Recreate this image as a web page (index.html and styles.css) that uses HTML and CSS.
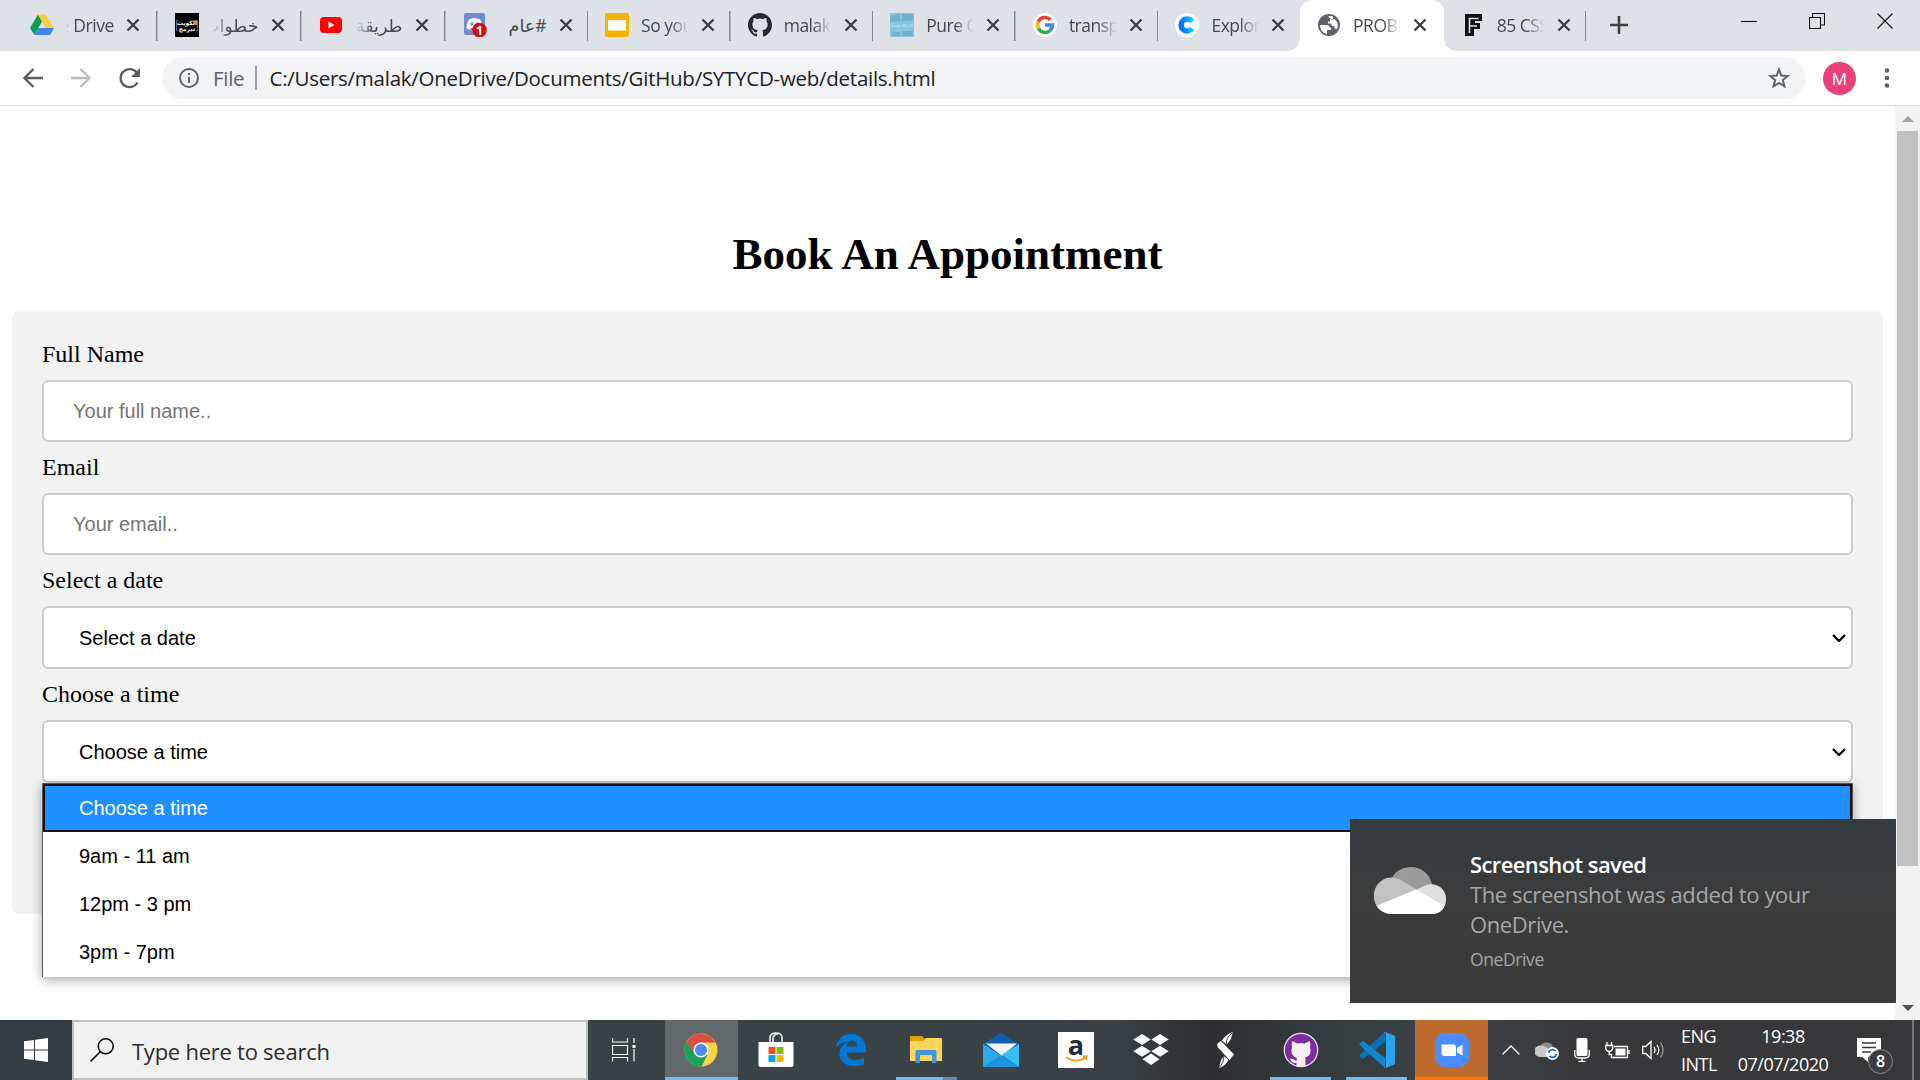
FILE: index.html
```html
<!DOCTYPE html>
<html lang="en">
<head>
<meta charset="utf-8">
<title>Book An Appointment</title>
<link rel="stylesheet" href="styles.css">
</head>
<body>
<div class="screen">
  <header class="tabstrip">
    <div class="tabs">
      <div class="tab">
        <svg class="fav" viewBox="0 0 24 24"><path fill="#0f9d58" d="M8 1.500 12 8.500 4.500 22 0 15z"/><path fill="#ffcd40" d="M8 1.500h7.700L24 15h-8z"/><path fill="#4285f4" d="M8.500 15H24l-4 7H4.500z"/></svg>
        <span class="label rtl"><span class="en">e Drive</span></span><svg class="close" viewBox="0 0 14 14"><path d="M1.5 1.5l11 11m0-11l-11 11"/></svg>
      </div>
      <div class="tab">
        <svg class="fav" viewBox="0 0 24 24"><rect width="24" height="24"/><path d="M3 7.500H1.500v10H3M21 7.500h1.500v10H21" fill="none" stroke="#3c6ea8"/><text x="12" y="12" class="logo-ar">الكويت</text><text x="12" y="17.500" class="logo-ar">تبرمج</text></svg>
        <span class="label rtl">خطوات</span><svg class="close" viewBox="0 0 14 14"><path d="M1.5 1.5l11 11m0-11l-11 11"/></svg>
      </div>
      <div class="tab">
        <svg class="fav" viewBox="0 0 24 24"><rect x="1" y="4" width="22" height="16" rx="4" fill="red"/><path fill="#fff" d="M9.500 8.500l6 3.500-6 3.500z"/></svg>
        <span class="label rtl">طريقة</span><svg class="close" viewBox="0 0 14 14"><path d="M1.5 1.5l11 11m0-11l-11 11"/></svg>
      </div>
      <div class="tab">
        <svg class="fav" viewBox="0 0 24 24"><rect x="1" width="21" height="22" rx="2" fill="#7289da"/><path fill="#fff" d="M6 6.500q5-3 11 0 3 5 2.500 9l-3.500 1.500-1-2H8l-1 2-3.500-1.500Q3 11 6 6.500z"/><circle cx="9" cy="11" r="1.700" fill="#7289da"/><circle cx="14" cy="11" r="1.700" fill="#7289da"/><circle cx="16.500" cy="17" r="7.300" fill="#d90b0b"/><text x="16.500" y="22" class="badge-one">1</text></svg>
        <span class="label rtl fit">#عام</span><svg class="close" viewBox="0 0 14 14"><path d="M1.5 1.5l11 11m0-11l-11 11"/></svg>
      </div>
      <div class="tab">
        <svg class="fav" viewBox="0 0 24 24"><rect width="24" height="24" rx="2" fill="#f4b400"/><rect x="3" y="7" width="18" height="10.500" fill="#fff"/></svg>
        <span class="label">So you</span><svg class="close" viewBox="0 0 14 14"><path d="M1.5 1.5l11 11m0-11l-11 11"/></svg>
      </div>
      <div class="tab">
        <svg class="fav" viewBox="0 0 16 16"><path fill="#24292e" d="M8 0C3.580 0 0 3.580 0 8c0 3.540 2.290 6.530 5.470 7.590.4.070.550-.170.550-.380 0-.190-.010-.820-.010-1.490-2.010.370-2.530-.490-2.690-.940-.090-.230-.480-.940-.820-1.130-.280-.150-.680-.520-.010-.530.630-.010 1.080.580 1.230.820.720 1.210 1.870.870 2.330.660.070-.520.280-.870.510-1.070-1.780-.200-3.640-.890-3.640-3.950 0-.870.310-1.590.820-2.150-.080-.200-.360-1.020.080-2.120 0 0 .670-.210 2.200.820.640-.180 1.320-.270 2-.270s1.360.090 2 .270c1.530-1.040 2.200-.820 2.200-.820.440 1.100.160 1.920.080 2.120.510.560.820 1.270.820 2.150 0 3.070-1.870 3.750-3.650 3.950.290.250.540.730.540 1.480 0 1.070-.010 1.930-.010 2.200 0 .210.150.460.550.380A8 8 0 0 0 16 8c0-4.420-3.580-8-8-8z"/></svg>
        <span class="label">malak</span><svg class="close" viewBox="0 0 14 14"><path d="M1.5 1.5l11 11m0-11l-11 11"/></svg>
      </div>
      <div class="tab">
        <svg class="fav" viewBox="0 0 24 24"><rect width="24" height="24" fill="#87c4dd"/><path d="M0 3l10-2v7L0 9zM12 1h11v6l-11 1zM2 19h8v4H2zM12 18h11v5H12z" fill="#6fb2d0"/><text x="12" y="14" class="logo-code">Code My UI</text></svg>
        <span class="label">Pure C</span><svg class="close" viewBox="0 0 14 14"><path d="M1.5 1.5l11 11m0-11l-11 11"/></svg>
      </div>
      <div class="tab">
        <svg class="fav" viewBox="0 0 24 24"><circle cx="12" cy="12" r="12" fill="#fff"/><g fill="none" stroke-width="3.600"><path stroke="#ea4335" d="M5.300 8.700a7.400 7.400 0 0 1 12.100-1.900"/><path stroke="#fbbc05" d="M5.300 8.700a7.400 7.400 0 0 0 0 6.600"/><path stroke="#34a853" d="M5.300 15.300a7.400 7.400 0 0 0 11.300 2.500"/><path stroke="#4285f4" d="M12 12h7.400a7.400 7.400 0 0 1-2.800 5.800"/></g></svg>
        <span class="label">transp</span><svg class="close" viewBox="0 0 14 14"><path d="M1.5 1.5l11 11m0-11l-11 11"/></svg>
      </div>
      <div class="tab">
        <svg class="fav" viewBox="0 0 24 24"><defs><linearGradient id="cg"><stop stop-color="#0a6cff"/><stop offset="1" stop-color="#0cf"/></linearGradient></defs><circle cx="12" cy="12" r="12" fill="#fff"/><path d="M17 8.500a6 6 0 1 0 0 7" fill="none" stroke="url(#cg)" stroke-width="5.500"/></svg>
        <span class="label">Explor</span><svg class="close" viewBox="0 0 14 14"><path d="M1.5 1.5l11 11m0-11l-11 11"/></svg>
      </div>
      <div class="tab active">
        <svg class="fav" viewBox="0 0 24 24"><circle cx="12" cy="12" r="11" fill="#5f6368"/><path fill="#fff" d="M3 12h7c3 0 2 3 4 3v2h-4v4c-5-1-7-5-7-9zM11 3.500c2-1 5 0 5 0v2.500h-3v2.500h-2v2h3.500v2.500h3v2.500l2.500.500c2-5 0-8-3-10l-2 1z"/></svg>
        <span class="label">PROBL</span><svg class="close" viewBox="0 0 14 14"><path d="M1.5 1.5l11 11m0-11l-11 11"/></svg>
      </div>
      <div class="tab">
        <svg class="fav" viewBox="0 0 24 24"><path fill="#111" d="M4 1h17v7H14v2h5v6h-6v7H4z"/><path fill="none" stroke="#dee1e6" stroke-width="1.600" d="M8.500 20V5.500h9M9 13h7"/></svg>
        <span class="label">85 CSS</span><svg class="close" viewBox="0 0 14 14"><path d="M1.5 1.5l11 11m0-11l-11 11"/></svg>
      </div>
    </div>
    <svg class="newtab" viewBox="0 0 18 18"><path d="M9 0v18M0 9h18"/></svg>
    <div class="winctl">
      <svg viewBox="0 0 16 16"><path d="M0 8.500h16"/></svg>
      <svg viewBox="0 0 16 16"><path d="M.5 4.500h11v11H.500zM3.500 4V.5h12v11.500H12"/></svg>
      <svg viewBox="0 0 16 16"><path d="M.5.5l15 15m0-15l-15 15"/></svg>
    </div>
  </header>

  <nav class="toolbar">
    <svg class="nav" viewBox="0 0 20 20"><path d="M20 10H2M10.500 1L1.500 10l9 9"/></svg>
    <svg class="nav dim" viewBox="0 0 20 20"><path d="M0 10h18M9.500 1l9 9-9 9"/></svg>
    <svg class="nav" viewBox="0 0 22 22"><path d="M18.500 15.500a9 9 0 1 1-.500-9.500"/><path class="solid" d="M21 1v9h-9z"/></svg>
    <div class="omnibox">
      <svg class="info" viewBox="0 0 20 20"><circle cx="10" cy="10" r="9"/><path d="M10 9v6M10 5v2"/></svg>
      <span class="scheme">File</span><i class="bar"></i><span class="url">C:/Users/malak/OneDrive/Documents/GitHub/SYTYCD-web/details.html</span>
      <svg class="star" viewBox="0 0 22 22"><path d="M11 2.500l2.300 6.100 6.500.400-5 4.100 1.700 6.300L11 16l-5.500 3.400L7.200 13.100 2.200 9l6.500-.400z"/></svg>
    </div>
    <span class="avatar">M</span>
    <svg class="dots" viewBox="0 0 6 20"><circle cx="3" cy="2.500" r="2.300"/><circle cx="3" cy="10" r="2.300"/><circle cx="3" cy="17.500" r="2.300"/></svg>
  </nav>

  <div class="viewport">
    <main class="page">
      <h1>Book An Appointment</h1>
      <form class="card">
        <label>Full Name</label>
        <div class="field hint">Your full name..</div>
        <label>Email</label>
        <div class="field hint">Your email..</div>
        <label>Select a date</label>
        <div class="field select">Select a date<svg viewBox="0 0 14 8"><path d="M1 1l6 6 6-6"/></svg></div>
        <label>Choose a time</label>
        <div class="field select">Choose a time<svg viewBox="0 0 14 8"><path d="M1 1l6 6 6-6"/></svg>
          <ul class="popup">
            <li class="on">Choose a time</li>
            <li>9am - 11 am</li>
            <li>12pm - 3 pm</li>
            <li>3pm - 7pm</li>
          </ul>
        </div>
      </form>
    </main>
    <div class="scrollbar">
      <svg viewBox="0 0 12 6"><path fill="#a3a3a3" d="M0 6l6-6 6 6z"/></svg>
      <div class="thumb"></div>
      <svg class="down" viewBox="0 0 12 6"><path fill="#505050" d="M0 0h12L6 6z"/></svg>
    </div>
    <aside class="toast">
      <svg class="cloud" viewBox="0 0 72 47"><defs><clipPath id="cl"><path d="M18 47C7 47 0 39 0 29c0-11 8-18.500 18-18.500C22 4 29 0 37 0c10 0 19 7 21 17.500 8 0 14 6.500 14 14.500 0 9-6 15-14 15z"/></clipPath></defs><g clip-path="url(#cl)"><rect width="72" height="47" fill="#9b9b9c"/><path fill="#c2c2c3" d="M0 47V10.500h18q5 0 9 2.500l16 10z"/><path fill="#e0e0e1" d="M42 23l8-4q4-2 8-2h14v30z"/><path fill="#fff" d="M0 40l42-17.500L72 40v7H0z"/></g></svg>
      <div class="toast-text">
        <strong>Screenshot saved</strong>
        <p>The screenshot was added to your<br>OneDrive.</p>
        <small>OneDrive</small>
      </div>
    </aside>
  </div>

  <footer class="taskbar">
    <div class="start"><svg viewBox="0 0 24 24"><path fill="#fff" d="M0 3.300L10 2v9.500H0zM11 1.800L24 0v11.500H11zM0 12.500h10V22L0 20.700zM11 12.500h13V24l-13-1.800z"/></svg></div>
    <div class="search"><svg viewBox="0 0 24 24"><circle cx="15.700" cy="8.300" r="7.500"/><path d="M10.300 13.700L.500 23.500"/></svg><span>Type here to search</span></div>
    <div class="apps">
      <div class="app view"><svg width="24" height="24" viewBox="0 0 24 24"><g fill="none" stroke="#fff" stroke-width="1.200"><path d="M.5 0v4h15V0M.5 23.500v-4h15v4M.5 7.500h15v9H.500zM22 0v5M22 11v12.500"/></g><path fill="#fff" d="M20.500 7h3v3h-3z"/></svg></div>
      <div class="app current"><svg width="34" height="34" viewBox="0 0 34 34"><circle cx="17" cy="17" r="16.500" fill="#fdd24b"/><path fill="#de4f43" d="M2.700 8.700A16.500 16.500 0 0 1 31.500 9.500H17L9.500 20z"/><path fill="#1b9f5b" d="M2.700 8.700A16.500 16.500 0 0 0 17.500 33.500l6-11.500L10 20z"/><circle cx="17" cy="17" r="7.600" fill="#f4f4f4"/><circle cx="17" cy="17" r="6" fill="#4c8bf5"/></svg></div>
      <div class="app"><svg width="36" height="36" viewBox="0 0 36 36"><path d="M12 10V6q0-5 6-5t6 5v4M15 10V6q1-4 5-4" fill="none" stroke="#e8e8e8" stroke-width="1.700"/><path fill="#fff" d="M.5 10h35v23q0 2-2 2h-31q-2 0-2-2z"/><path fill="#f25022" d="M10.500 15h7v7h-7z"/><path fill="#7fba00" d="M18.500 15h7v7h-7z"/><path fill="#00a4ef" d="M10.500 23h7v7h-7z"/><path fill="#ffb900" d="M18.500 23h7v7h-7z"/></svg></div>
      <div class="app"><svg width="30" height="32" viewBox="0 0 30 32"><path fill="#0078d7" d="M0 14C1 6 6 0 15 0c10 0 15 7 15 15v3.500H10.500c.300 5 4 7.500 9 7.500 3.500 0 6.500-1 8.500-2.300V30c-3 1.500-6 2-10 2C9 32 3.500 27 3.500 20c0-5.500 3-9.500 8-12C6 8 2.500 10.500 0 14zm10.500-1.500H21C21 9 19 6.800 16 6.800s-5 2.400-5.500 5.700z"/></svg></div>
      <div class="app open stacked"><svg width="32" height="28" viewBox="0 0 32 28"><path fill="#dfa000" d="M0 1q0-1 1-1h11l3 3-2 3H0z"/><path fill="#ffd55c" d="M0 5h13l3-3h15q1 0 1 1v22H0z"/><path fill="#3a96dd" d="M7 14h18q1.500 0 1.500 1.500V27H22v-8H10v8H5.500V15.500Q5.500 14 7 14z"/></svg></div>
      <div class="app"><svg width="36" height="34" viewBox="0 0 36 34"><path fill="#0f5fb0" d="M0 11L16 1q2-1.500 4 0l16 10-10 12H9z"/><path fill="#f2f2f5" d="M3 10.500h31L19 23z"/><path fill="#2ea7ec" d="M0 11l18 11.500L36 34H0z"/><path fill="#35c0f3" d="M36 11L18.500 22 36 34z"/><path fill="#1c94e0" d="M0 34l18-11.500L36 34z"/></svg></div>
      <div class="app"><svg width="36" height="36" viewBox="0 0 36 36"><rect width="36" height="36" fill="#fff"/><text x="18" y="22.500" class="amz">a</text><path d="M8 25.500q10 6 19 .5M25 24.500l3.500-.3-.8 3.300" fill="none" stroke="#f90" stroke-width="1.900"/></svg></div>
      <div class="app"><svg width="36" height="32" viewBox="0 0 36 32"><path fill="#fff" d="M9 0l8.700 5.500L9 11 .3 5.500zM27 0l8.700 5.500L27 11l-8.700-5.500zM9 11.800l8.700 5.500L9 22.800.3 17.300zM27 11.800l8.700 5.500-8.700 5.500-8.700-5.500zM18 19.500l8.500 5.700L18 31l-8.500-5.800z"/></svg></div>
      <div class="app"><svg width="18" height="36" viewBox="0 0 18 36"><path fill="#fff" d="M.5 11.500L4 9l13 13.500-4.500 5.500L1 15.500q-1-2-.5-4zM15.500 0q0 7-6 12.500L5 8.500Q8 3 15.500 0zM2.500 36q0-7 4.500-12l4.500 4Q9 33 2.500 36z"/><path d="M15 1Q8.500 6 9.500 12.500M3 35q4-5 4-11" fill="none" stroke="#2e2e31" stroke-width=".9"/></svg></div>
      <div class="app open"><svg width="36" height="36" viewBox="0 0 36 36"><circle cx="18" cy="18" r="16.700" fill="#7f2c9d" stroke="#e6dcea" stroke-width="1.300"/><path fill="#f3f0f5" d="M9.500 9l5 2.500q3.500-.8 7 0l5-2.500q1.500 3 .5 6 2.500 9-5 10.500.5 1 .5 2.500v6.200q-4.500 1-9 0V31q-5 .5-6.500-4.500 3 0 6.500 2.500 0-2 .5-3Q6.500 24 9 15q-1-3 .5-6z"/></svg></div>
      <div class="app open code"><svg width="36" height="36" viewBox="0 0 36 36"><path fill="#0b6fb5" d="M1 22.500L26 0v10L5 26.500q-1 .8-2 0L.8 24.500q-1-1 .2-2z"/><path fill="#0f86cf" d="M1 13.500L26 36V26L5 9.500q-1-.8-2 0L.8 11.500q-1 1 .2 2z"/><path fill="#2aa5f0" d="M25 .5Q26 0 27 .3l8 3.200q1 .5 1 1.500v26q0 1-1 1.500l-8 3.200q-1 .3-2-.2 2 .5 2-2V3q0-2.500-2-2.500z"/></svg></div>
      <div class="app alert"><svg width="34" height="34" viewBox="0 0 34 34"><rect width="34" height="34" rx="10" fill="#4a8cff"/><path fill="#fff" d="M6.500 11.500H18q3 0 3 3V23H9.500q-3 0-3-3zM22 15l5.500-3.500v11L22 19.500z"/></svg></div>
    </div>
    <div class="tray">
      <svg width="18" height="10" viewBox="0 0 18 10"><path class="ln" d="M.7 9.300L9 1l8.300 8.300"/></svg>
      <svg width="24" height="20" viewBox="0 0 24 20"><path fill="#8d8d8f" d="M5 7a7 7 0 0 1 13 0v5z"/><path fill="#c9c9ca" d="M5 17A5.500 5.500 0 0 1 5 5.500Q9 5 14 9v8z"/><circle cx="17.500" cy="13.500" r="6.500" fill="#fff"/><path d="M13.500 13a4 4 0 0 1 7-2M21.500 14a4 4 0 0 1-7 2" fill="none" stroke="#1565b5" stroke-width="1.700"/></svg>
      <svg width="16" height="24" viewBox="0 0 16 24"><rect x="2.500" width="11" height="18" rx="1.500" fill="#fff"/><path class="ln" d="M.7 12v4q0 4 4 4h6.600q4 0 4-4v-4M8 20v3M4.500 23.300h7"/></svg>
      <svg width="25" height="17" viewBox="0 0 25 17"><path class="ln" d="M9 4.500h13.500v11H6.500v-3M24 8v4M2 0v3M6.500 0v3M.7 3.500h7v3q-1 3-3.500 3T.7 6.500zM4.200 9.500v3h3"/><path fill="#fff" d="M10.500 6.500h10v7h-10z"/></svg>
      <svg width="24" height="20" viewBox="0 0 24 20"><path class="ln" d="M.7 6.500h3L9 1.500v17l-5.300-5H.700zM12 7q2 3 0 6M15 5q3.500 5 0 10"/><path class="ln" opacity=".5" d="M18.500 2.500q5 7.500 0 15"/></svg>
      <div class="pair lang"><span>ENG</span><span>INTL</span></div>
      <div class="pair clock"><span>19:38</span><span>07/07/2020</span></div>
      <div class="notes"><svg width="24" height="24" viewBox="0 0 24 24"><path fill="#fff" d="M0 0h24v19H11v5l-6-5H0z"/><path stroke="#38383b" stroke-width="1.300" d="M5 5h14M5 9.500h14M5 14h9"/></svg><b>8</b></div>
      <i class="peek"></i>
    </div>
  </footer>
</div>
</body>
</html>
```
FILE: styles.css
```css
* { box-sizing: border-box; }
body { margin: 0; background: #fff; overflow: hidden; }
svg { display: block; flex: none; }
.screen {
  width: 1920px; height: 1080px;
  display: flex; flex-direction: column;
  font-family: "Open Sans", "Noto Sans", sans-serif;
}

/* tab strip */
.tabstrip { height: 51px; background: #dee1e6; display: flex; align-items: flex-start; padding-left: 14px; }
.tabs { display: flex; }
.tab {
  width: 142.6px; height: 51px; padding: 0 0 1px 17px;
  display: flex; align-items: center;
  background: linear-gradient(#85888d, #85888d) right 11px / 1.5px 30px no-repeat;
}
.tab:nth-child(1) { width: 143.5px; padding-left: 16px; }
.tab:nth-child(2), .tab:nth-child(3) { width: 144px; }
.tab:nth-child(9) { background: none; width: 141.6px; }
.tab.active { position: relative; width: 143.6px; background: #fff; border-radius: 12px 12px 0 0; }
.tab.active::before, .tab.active::after {
  content: ""; position: absolute; bottom: 0; width: 12px; height: 12px;
}
.tab.active::before { left: -12px; background: radial-gradient(circle at 0 0, transparent 11.5px, #fff 12px); }
.tab.active::after { right: -12px; background: radial-gradient(circle at 100% 0, transparent 11.5px, #fff 12px); }
.fav { width: 24px; height: 24px; }
.label {
  width: 48px; margin-left: 12px; overflow: hidden; white-space: nowrap;
  font-size: 17.5px; line-height: 30px; letter-spacing: -0.5px; color: #45484c;
  -webkit-mask-image: linear-gradient(90deg, #000 60%, transparent);
  mask-image: linear-gradient(90deg, #000 60%, transparent);
}
.label.rtl {
  direction: rtl; letter-spacing: 0; font-family: "Open Sans", "DejaVu Sans", sans-serif;
  -webkit-mask-image: linear-gradient(270deg, #000 60%, transparent);
  mask-image: linear-gradient(270deg, #000 60%, transparent);
}
.tab:first-child .label { -webkit-mask-image: linear-gradient(270deg, #000 80%, transparent); mask-image: linear-gradient(270deg, #000 80%, transparent); }
.label .en { unicode-bidi: embed; direction: ltr; letter-spacing: -0.4px; }
.label.fit { -webkit-mask-image: none; mask-image: none; }
.close { width: 14px; height: 14px; margin-left: 12px; fill: none; stroke: #3c4043; stroke-width: 2.4; }
.logo-ar { fill: #fff; font: 700 6px "DejaVu Sans", sans-serif; text-anchor: middle; }
.logo-code { fill: #d8eef7; font: 4px "Open Sans", sans-serif; text-anchor: middle; }
.badge-one { fill: #fff; font: 700 13px "Open Sans", sans-serif; text-anchor: middle; }
.newtab { width: 18px; height: 18px; margin: 16px 0 0 24px; stroke: #3c4043; stroke-width: 2.6; }
.winctl { margin: 13px 27px 0 auto; display: flex; gap: 52px; }
.winctl svg { width: 16px; height: 16px; fill: none; stroke: #111; stroke-width: 1.1; }

/* toolbar */
.toolbar { height: 55px; border-bottom: 1px solid #d9dadc; display: flex; align-items: center; padding-left: 23px; }
.nav { width: 20px; height: 20px; margin-right: 28px; fill: none; stroke: #5a5d61; stroke-width: 2.3; }
.nav.dim { stroke: #babcbe; }
.nav:nth-child(3) { width: 22px; height: 22px; margin-right: 21px; }
.solid { fill: #5a5d61; stroke: none; }
.omnibox {
  width: 1644px; height: 42px; border-radius: 21px; background: #f1f3f4;
  display: flex; align-items: center; font-size: 20.5px;
  padding: 0 16px 0 17px;
}
.info { width: 20px; height: 20px; fill: none; stroke: #5f6368; stroke-width: 2; }
.scheme { margin-left: 14px; width: 32px; color: #5f6368; letter-spacing: -0.3px; }
.bar { width: 1.5px; height: 24px; background: #9b9ea2; margin: 0 13px 0 10px; }
.url { color: #202124; letter-spacing: -0.26px; white-space: nowrap; }
.star { width: 22px; height: 22px; margin-left: auto; fill: none; stroke: #5f6368; stroke-width: 2; }
.avatar { width: 33px; height: 33px; border-radius: 50%; background: #ec407a; color: #fff; font-size: 17px; line-height: 33px; text-align: center; margin-left: 17px; }
.dots { width: 6px; height: 20px; margin-left: 28px; fill: #5f6368; }

/* document area */
.viewport { position: relative; height: 914px; display: flex; background: #fff; }
.page { width: 1895px; padding: 0 12px; font-family: "Liberation Serif", serif; }
h1 { margin: 121px 0 29px; font-size: 45px; line-height: 55px; text-align: center; font-weight: 700; }
.card { height: 603px; border-radius: 7px; background: #f2f2f2; padding: 29px 30px; }
label { display: block; font-size: 24px; line-height: 28px; }
.field {
  height: 62px; margin: 12px 0 11px; border: 2px solid #ccc; border-radius: 6px; background: #fff;
  padding-left: 29px; font: 20px/58px "Liberation Sans", sans-serif; color: #000;
}
.hint { color: #757575; }
.select { position: relative; height: 63px; display: flex; align-items: center; justify-content: space-between; padding: 0 5px 0 35px; }
.select svg { width: 14px; height: 8px; fill: none; stroke: #000; stroke-width: 2.3; }
.popup {
  position: absolute; z-index: 2; left: -2px; right: -2px; top: 61px; height: 194px;
  margin: 0; padding: 0; list-style: none; background: #fff;
  border: 1px solid #555; border-bottom: 0; box-shadow: 0 3px 11px rgba(0, 0, 0, .35);
}
.popup li { height: 48px; line-height: 49px; padding-left: 36px; }
.popup .on { background: #1e90ff; color: #fff; border: 2px solid #101010; line-height: 44px; padding-left: 34px; }

.scrollbar { width: 25px; background: #f1f1f1; display: flex; flex-direction: column; align-items: center; padding: 10px 0 9px; }
.scrollbar svg { width: 12px; height: 6px; }
.thumb { width: 21px; height: 735px; margin-top: 9px; background: #c1c1c1; }
.down { margin-top: auto; }

.toast {
  position: absolute; z-index: 3; left: 1350px; top: 713px; width: 546px; height: 184px;
  background: linear-gradient(#363b40, #3b3b3b 50%, #3a3a3a); color: #a6a6a6;
  display: flex; padding: 30px 0 0 24px; gap: 24px;
}
.cloud { width: 72px; height: 47px; margin-top: 18px; }
.toast-text { display: flex; flex-direction: column; font-size: 22px; line-height: 30px; white-space: nowrap; letter-spacing: -0.4px; }
.toast strong { color: #fff; font-weight: 600; letter-spacing: -0.6px; }
.toast p { margin: 0; }
.toast small { font-size: 17.5px; line-height: 24px; margin-top: 8px; }

/* taskbar */
.taskbar {
  height: 60px; display: flex; color: #fff;
  background: linear-gradient(90deg, #333b43, #3a4345 40%, #3a4247 52%, #3a4044 58%, #2e2e31 63%, #343a3d 68%, #3b4345 75%, #38373a 83%, #38373a);
}
.start { width: 72px; padding: 18px 24px; }
.start svg { width: 24px; height: 24px; }
.search { width: 516px; border: 2px solid #bfbfbf; background: #f1f1f1; display: flex; align-items: center; padding-left: 16px; color: #2b2b2b; font-size: 22px; letter-spacing: -0.25px; }
.search svg { width: 24px; height: 24px; fill: none; stroke: #111; stroke-width: 1.6; margin-right: 18px; }
.search span { padding-top: 2px; }
.apps { display: flex; }
.app { position: relative; width: 75px; display: flex; align-items: center; justify-content: center; }
.app.view { width: 77px; padding-right: 5px; }
.app.current { width: 73px; padding-right: 2px; background: #63686a; }
.app.current::after, .app.open::after {
  content: ""; position: absolute; bottom: 0; left: 7px; right: 7px; height: 3px; background: #76b9ed;
}
.app.current::after { left: 0; right: 0; }
.app.stacked::after { left: 8px; right: 6px; background: linear-gradient(90deg, #76b9ed 47px, #5c8fb6 47px); }
.app.code { width: 77px; }
.app.code::after { left: 8px; right: 8px; }
.app.alert { width: 73px; background: #bd6c2d; border-bottom: 3px solid #ff7400; padding-top: 3px; }
.amz { fill: #232f3e; font: 700 27px "Open Sans", sans-serif; text-anchor: middle; }
.tray { flex: 1; display: flex; align-items: center; padding-left: 14px; }
.ln { fill: none; stroke: #fff; stroke-width: 1.3; }
.tray > svg { margin-right: 15px; }
.tray > svg:nth-child(4) { margin-right: 12px; }
.pair { display: flex; flex-direction: column; text-align: center; font-size: 18px; line-height: 27.5px; letter-spacing: -0.5px; white-space: nowrap; padding-top: 1px; }
.lang { width: 50px; text-align: left; }
.clock { width: 104px; }
.notes { position: relative; margin-left: 22px; }
.notes b {
  position: absolute; left: 11px; top: 11px; width: 25px; height: 25px; border-radius: 50%;
  background: #3c3c3f; border: 1px solid #8a8a8c; font-size: 16px; font-weight: 600; line-height: 23px; text-align: center;
}
.peek { width: 2px; height: 60px; margin-left: auto; margin-right: 6px; background: #77777a; }
```
